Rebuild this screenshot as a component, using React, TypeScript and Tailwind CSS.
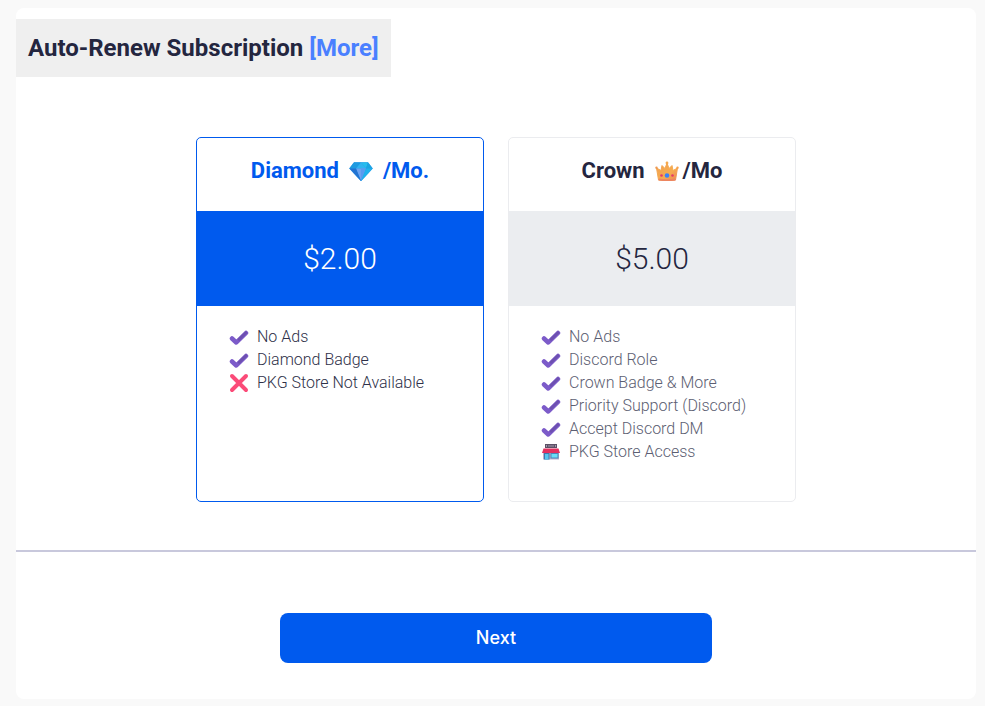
import { useState } from 'react';
import clsx from 'clsx';

type FeatureIcon = 'check' | 'cross' | 'store';

interface Feature {
    icon: FeatureIcon;
    label: string;
}

interface Plan {
    id: string;
    name: string;
    suffix: string;
    price: string;
    features: Feature[];
}

const plans: Plan[] = [
    {
        id: 'diamond',
        name: 'Diamond',
        suffix: '/Mo.',
        price: '$2.00',
        features: [
            { icon: 'check', label: 'No Ads' },
            { icon: 'check', label: 'Diamond Badge' },
            { icon: 'cross', label: 'PKG Store Not Available' },
        ],
    },
    {
        id: 'crown',
        name: 'Crown',
        suffix: '/Mo',
        price: '$5.00',
        features: [
            { icon: 'check', label: 'No Ads' },
            { icon: 'check', label: 'Discord Role' },
            { icon: 'check', label: 'Crown Badge & More' },
            { icon: 'check', label: 'Priority Support (Discord)' },
            { icon: 'check', label: 'Accept Discord DM' },
            { icon: 'store', label: 'PKG Store Access' },
        ],
    },
];

function DiamondIcon() {
    return (
        <svg viewBox="0 0 24 20" className="h-5 w-6" aria-hidden="true">
            <path d="M5 1.5h14l4.5 6L12 20 .5 7.5z" fill="#2596e8" stroke="#2596e8" strokeWidth="0.6" strokeLinejoin="round" />
            <path d="M5 1.5h7l-5 6H.5z" fill="#1f9be0" />
            <path d="M12 1.5h7l-2 6z" fill="#26bdec" />
            <path d="M19 1.5l4.500 6H17z" fill="#1aa5e2" />
            <path d="M12 1.5l-5 6h10z" fill="#30b4f0" />
            <path d="M7 7.5h10L12 20z" fill="#6ea3f0" />
            <path d="M12 7.5h5L12 20z" fill="#5a9bf0" />
            <path d="M.5 7.5H7L12 20z" fill="#2273d2" />
            <path d="M23.5 7.5H17L12 20z" fill="#1fb2ec" />
        </svg>
    );
}

function CrownIcon() {
    return (
        <svg viewBox="0 0 24 20" className="h-5 w-6" aria-hidden="true">
            <defs>
                <linearGradient id="crown-gold" x1="0" y1="0" x2="1" y2="1">
                    <stop offset="0" stopColor="#f0a050" />
                    <stop offset="0.6" stopColor="#f6ac50" />
                    <stop offset="1" stopColor="#ea8458" />
                </linearGradient>
            </defs>
            <path
                d="M1.5 7L6 9.500 7 4.500l3 3L12 2l2 5.500 3-3 1 5L22.500 7l-2 12Q12 20.500 3.500 19z"
                fill="url(#crown-gold)"
                stroke="url(#crown-gold)"
                strokeLinejoin="round"
            />
            <circle cx="12" cy="2" r="1.4" fill="#f5a94e" />
            <circle cx="1.500" cy="6.800" r="1.2" fill="#ee9a52" />
            <circle cx="22.500" cy="6.800" r="1.2" fill="#f6a04c" />
            <path d="M3.500 17.500Q12 19 20.500 17.500v2Q12 20.500 3.500 19.500z" fill="#ed8560" />
            <circle cx="12" cy="14.500" r="2.300" fill="#3b82f6" />
            <circle cx="6.500" cy="14.500" r="1.300" fill="#e5396b" />
            <circle cx="17.500" cy="14.500" r="1.300" fill="#e5396b" />
        </svg>
    );
}

function FeatureGlyph({ icon }: { icon: FeatureIcon }) {
    if (icon === 'cross') {
        return (
            <svg viewBox="0 0 20 20" className="size-5 shrink-0" aria-hidden="true">
                <path d="M3 3l14 14M17 3L3 17" fill="none" stroke="#fb4b78" strokeWidth="4" strokeLinecap="round" />
            </svg>
        );
    }

    if (icon === 'store') {
        return (
            <svg viewBox="0 0 20 20" className="size-5 shrink-0" aria-hidden="true">
                <path d="M4 2h12v4H4z" fill="#5b5166" />
                <path d="M5.5 3v2M8 3v2M10 3v2M12 3v2M14.5 3v2" stroke="#a597aa" />
                <path d="M2 10h16v7.500H2z" fill="#b9aecb" />
                <path d="M2.500 6.500h15L19 11H1z" fill="#e2305f" />
                <path d="M3 11h5.500v6.500H3z" fill="#3c79ad" />
                <path d="M4 12h3.500v5.500H4z" fill="#58c5ee" />
                <path d="M9.500 11H17.500v5.500h-8z" fill="#4788b8" />
                <path d="M10.500 12h6v3.500h-6z" fill="#6bdcf5" />
            </svg>
        );
    }

    return (
        <svg viewBox="0 0 20 20" className="size-5 shrink-0" aria-hidden="true">
            <path
                d="M3 11.500l4.300 4L17 6"
                fill="none"
                stroke="#7c5bc9"
                strokeWidth="4.500"
                strokeLinecap="round"
                strokeLinejoin="round"
            />
            <path d="M10 12.500L17 5.700" fill="none" stroke="#6d50b0" strokeWidth="2.500" strokeLinecap="round" />
        </svg>
    );
}

interface PlanCardProps {
    plan: Plan;
    selected: boolean;
    onSelect: () => void;
}

function PlanCard({ plan, selected, onSelect }: PlanCardProps) {
    return (
        <label
            className={clsx(
                'flex w-[30%] cursor-pointer flex-col overflow-hidden rounded-[5px] border bg-white',
                selected ? 'border-[#005aee]' : 'border-[#ebecef]'
            )}
        >
            <input
                type="radio"
                name="plan"
                value={plan.id}
                checked={selected}
                onChange={onSelect}
                className="sr-only"
            />
            <h3
                className={clsx(
                    'flex items-center justify-center pt-4 pb-6 text-[22px] leading-[33px] font-bold',
                    selected ? 'text-[#005aee]' : 'text-[#24263f]'
                )}
            >
                {plan.name}
                <span className={clsx('ml-2.5', plan.id === 'diamond' ? 'mr-2.5' : 'mr-1')}>
                    {plan.id === 'diamond' ? <DiamondIcon /> : <CrownIcon />}
                </span>
                {plan.suffix}
            </h3>
            <div
                className={clsx(
                    'py-6 text-center text-3xl leading-[47px] font-light',
                    selected ? 'bg-[#005aee] text-white' : 'bg-[#ebedf0] text-[#24263f]'
                )}
            >
                {plan.price}
            </div>
            <ul
                className={clsx(
                    'px-8 pt-[19px] pb-[38px] text-base leading-[23px] font-light',
                    selected ? 'text-[#2e3048]' : 'text-[#5c5e72]'
                )}
            >
                {plan.features.map((feature) => (
                    <li key={feature.label} className="flex items-center gap-2 whitespace-nowrap">
                        <FeatureGlyph icon={feature.icon} />
                        {feature.label}
                    </li>
                ))}
            </ul>
        </label>
    );
}

export default function App() {
    const [selected, setSelected] = useState('diamond');

    return (
        <div className="min-h-screen bg-[#f9f9f9] py-2 pr-[9px] pl-4 font-['Roboto',sans-serif]">
            <main className="rounded-lg bg-white pt-[11px] pb-9">
                <h2 className="w-fit bg-[#efefef] px-3 py-3 text-2xl leading-[34px] font-bold text-[#24263f]">
                    Auto-Renew Subscription{' '}
                    <a href="#more" className="text-[#4a80ff]">
                        [More]
                    </a>
                </h2>

                <div className="mt-[60px] flex justify-center gap-6">
                    {plans.map((plan) => (
                        <PlanCard
                            key={plan.id}
                            plan={plan}
                            selected={selected === plan.id}
                            onSelect={() => setSelected(plan.id)}
                        />
                    ))}
                </div>

                <hr className="mt-12 border-t-2 border-[#c8c8dc]" />

                <button
                    type="button"
                    className="mx-auto mt-[61px] block h-[50px] w-[45%] rounded-lg bg-[#005aee] font-['Inter',sans-serif] text-lg font-medium text-white"
                >
                    Next
                </button>
            </main>
        </div>
    );
}
